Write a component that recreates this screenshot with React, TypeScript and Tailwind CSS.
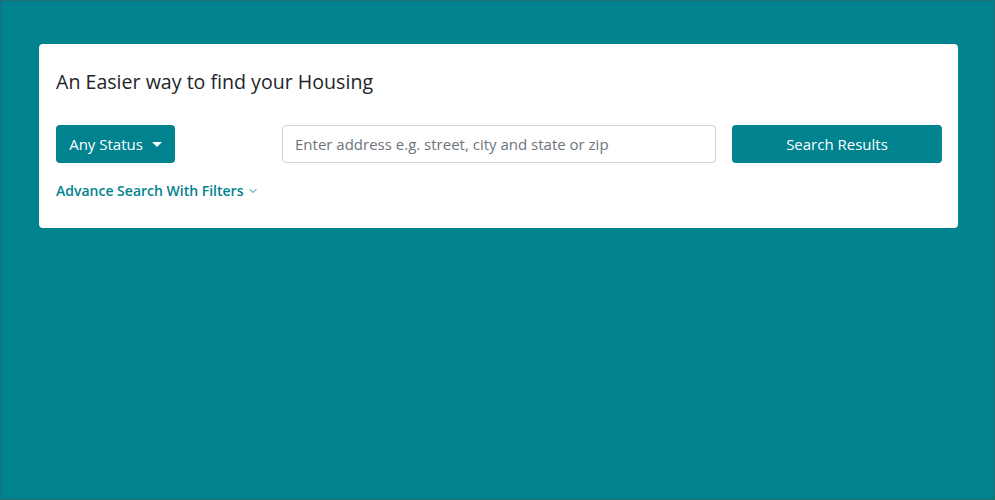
import { ChevronDown } from "lucide-react";

export default function App() {
  return (
    <div
      className="h-[500px] w-full border border-[#1f6f75] bg-[#00838f] pl-[38px] pr-[36px] pt-[43px]"
      style={{ fontFamily: '"Open Sans", "Noto Sans", sans-serif' }}
    >
      {/* Search card */}
      <div className="h-[184px] rounded-[4px] bg-white pl-[17px] pr-[16px] pt-[24px]">
        <h1 className="text-[19.6px] leading-[28px] text-[#212529]">
          An Easier way to find your Housing
        </h1>

        <div className="mt-[29px] flex items-center">
          <button className="flex h-[38px] w-[119px] shrink-0 items-center justify-center gap-[9px] rounded-[4px] bg-[#00838f] text-[15px] text-white">
            Any Status
            <span className="mt-[1px] border-x-[5px] border-t-[5px] border-x-transparent border-t-white" />
          </button>

          <input
            className="ml-[107px] h-[38px] w-[434px] shrink-0 rounded-[4px] border border-[#ced4da] px-[12px] text-[15px] text-[#495057] outline-none placeholder:text-[#6c757d]"
            placeholder="Enter address e.g. street, city and state or zip"
          />

          <button className="ml-[16px] h-[38px] w-[210px] shrink-0 rounded-[4px] bg-[#00838f] text-[15px] text-white">
            Search Results
          </button>
        </div>

        <a className="mt-[17px] flex items-center gap-[4px] text-[14px] font-semibold text-[#00838f]">
          Advance Search With Filters
          <ChevronDown size={12} strokeWidth={2} className="mt-[1px]" />
        </a>
      </div>
    </div>
  );
}
